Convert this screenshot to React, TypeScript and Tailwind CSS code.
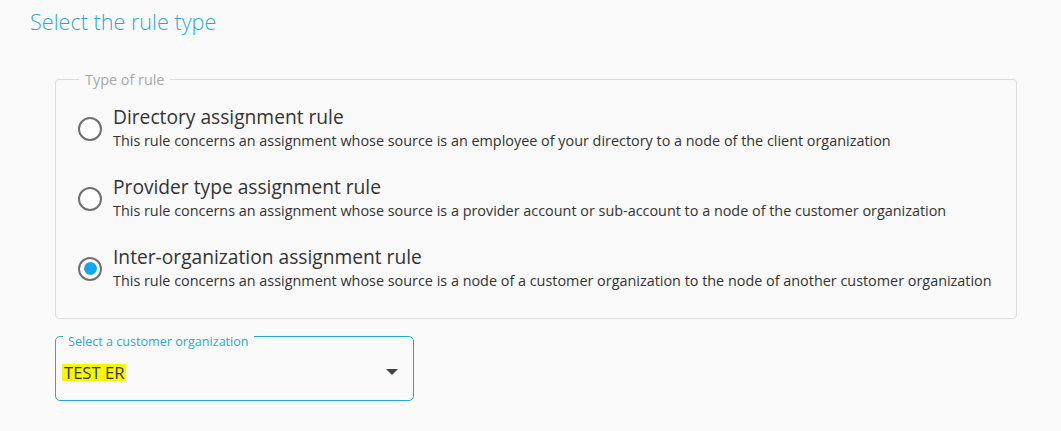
import { useState } from 'react'

const rules = [
  {
    id: 'directory',
    title: 'Directory assignment rule',
    description:
      'This rule concerns an assignment whose source is an employee of your directory to a node of the client organization',
  },
  {
    id: 'provider',
    title: 'Provider type assignment rule',
    description:
      'This rule concerns an assignment whose source is a provider account or sub-account to a node of the customer organization',
  },
  {
    id: 'inter',
    title: 'Inter-organization assignment rule',
    description:
      'This rule concerns an assignment whose source is a node of a customer organization to the node of another customer organization',
  },
]

function Radio({ checked }: { checked: boolean }) {
  return (
    <span className="flex items-center justify-center w-[24px] h-[24px] rounded-full border-2 border-[#707070] bg-white shrink-0">
      {checked && <span className="w-[13px] h-[13px] rounded-full bg-[#11a9ec]" />}
    </span>
  )
}

export default function App() {
  const [selected, setSelected] = useState('inter')

  return (
    <div className="min-h-[431px] bg-[#fafafa] font-['Open_Sans',sans-serif] text-[#333]">
      <div className="pl-[30px] pt-[7px]">
        <h1 className="text-[21.6px] font-light text-[#2aa7da] leading-[30px]">Select the rule type</h1>
      </div>

      <div className="pl-[55px] pr-[44px] pt-[32px]">
        <fieldset className="border border-[#dcdcdc] rounded-[4px] bg-[#f9f9f9] pl-[22px] pr-4 pb-[25px]">
          <legend className="ml-[1px] px-[6px] text-[14.4px] text-[#a8a8a8]">Type of rule</legend>
          <div className="flex flex-col gap-[22px] pt-[14px]">
            {rules.map((rule) => (
              <label
                key={rule.id}
                className="flex items-center gap-[11px] cursor-pointer"
                onClick={() => setSelected(rule.id)}
              >
                <Radio checked={selected === rule.id} />
                <div className="flex flex-col">
                  <span className="text-[19.2px] leading-[24px] text-[#333]">{rule.title}</span>
                  <span className="text-[14.4px] leading-[24px] text-[#333]">{rule.description}</span>
                </div>
              </label>
            ))}
          </div>
        </fieldset>
      </div>

      <div className="pl-[55px] pt-[17px]">
        <div className="relative w-[359px] h-[65px] border border-[#2aa7da] rounded-[5px] pl-[6px] pr-[15px]">
          <span className="absolute left-[7px] top-[-3px] bg-[#fafafa] px-[5px] text-[12.6px] leading-[15px] text-[#2aa7da]">
            Select a customer organization
          </span>
          <div className="flex items-center justify-between pt-[27px]">
            <span className="bg-[#f7f700] px-[2px] text-[16.6px] leading-[17px] text-[#333]">TEST ER</span>
            <svg width="12" height="7" viewBox="0 0 12 7">
              <path d="M0 0 L12 0 L6 6 Z" fill="#444" />
            </svg>
          </div>
        </div>
      </div>
    </div>
  )
}
